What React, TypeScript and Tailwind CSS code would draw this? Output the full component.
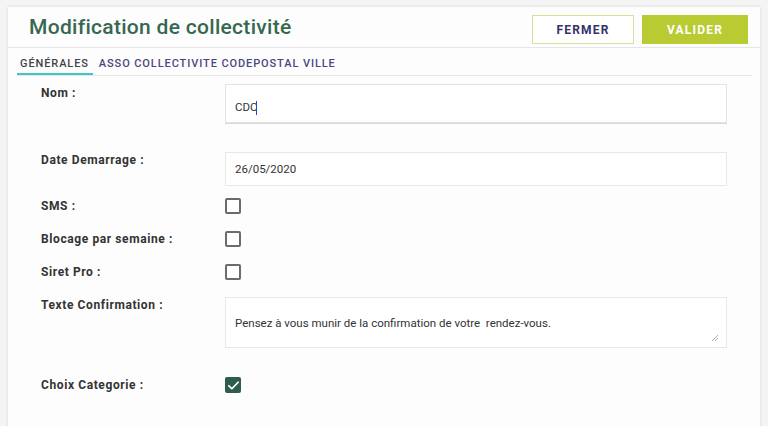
import React from "react";

function Checkbox({ checked }: { checked?: boolean }) {
  if (checked) {
    return (
      <div className="w-4 h-4 rounded-[2px] bg-[#2e5d4b] flex items-center justify-center">
        <svg width="13" height="13" viewBox="0 0 24 24" fill="none">
          <path d="M3.5 12.5l5.5 5.5L20.5 6" stroke="white" strokeWidth="3.2" strokeLinecap="round" strokeLinejoin="round" />
        </svg>
      </div>
    );
  }
  return <div className="w-4 h-4 rounded-[2px] border-2 border-[#6b6b6b] bg-white" />;
}

export default function App() {
  const label = "w-[184px] shrink-0 text-[12px] leading-4 font-bold tracking-[0.6px] text-[#333333]";
  return (
    <div className="w-[768px] h-[426px] bg-[#f4f4f4] overflow-hidden" style={{ fontFamily: "Roboto, 'Liberation Sans', sans-serif" }}>
      <div className="ml-[8px] mt-[7px] w-[752px] h-[440px] bg-[#fdfdfd] shadow-[0_0_3px_rgba(0,0,0,0.12)]">
        <div className="h-[41px] border-b border-[#e6e6e6] flex items-start justify-between pl-[21px] pr-[12px]">
          <h1 className="text-[21px] font-medium text-[#36684f] tracking-[0.3px] leading-none pt-[10px]">Modification de collectivité</h1>
          <div className="flex gap-[8px] pt-[8px]">
            <button className="w-[102px] h-[29px] border border-[#d5e29a] bg-white text-[12px] font-bold tracking-[1.2px] text-[#35336a] pt-[1px]">FERMER</button>
            <button className="w-[106px] h-[29px] bg-[#b8cb33] text-[12px] font-bold tracking-[1.2px] text-white pt-[1px]">VALIDER</button>
          </div>
        </div>
        <div className="ml-[9px] mr-[8px] h-[28px] border-b border-[#e6e6e6] flex items-start">
          <div className="h-[27px] pl-[3px] pr-[4px] pt-[9px] leading-[13px] border-b-2 border-[#3ec8be] text-[11px] tracking-[0.9px] text-[#444] font-medium">GÉNÉRALES</div>
          <div className="h-[27px] pl-[6px] pt-[9px] leading-[13px] text-[11px] tracking-[0.9px] text-[#4a4780] font-medium">ASSO COLLECTIVITE CODEPOSTAL VILLE</div>
        </div>
        <div className="pl-[33px] pr-[33px]">
          <div className="flex mt-[8px]">
            <div className={label + " pt-[1px]"}>Nom :</div>
            <div className="flex-1 h-[39px] border border-[#e3e3e3] shadow-[0_1px_0_#d9d9d9] bg-white flex items-center pl-[9px] pt-[9px] text-[11.5px] text-[#333]">
              CDC<span className="w-px h-[14px] bg-[#1a4bd6] -ml-[2px]" />
            </div>
          </div>
          <div className="flex mt-[29px]">
            <div className={label}>Date Demarrage :</div>
            <div className="flex-1 h-[34px] border border-[#e8e8e8] bg-white flex items-center pl-[9px] pt-[2px] text-[11.5px] text-[#333]">26/05/2020</div>
          </div>
          <div className="flex items-center mt-[12px]">
            <div className={label}>SMS :</div>
            <Checkbox />
          </div>
          <div className="flex items-center mt-[17px]">
            <div className={label}>Blocage par semaine :</div>
            <Checkbox />
          </div>
          <div className="flex items-center mt-[17px]">
            <div className={label}>Siret Pro :</div>
            <Checkbox />
          </div>
          <div className="flex mt-[17px]">
            <div className={label}>Texte Confirmation :</div>
            <div className="flex-1 h-[51px] border border-[#e8e8e8] bg-white relative pl-[9px] pt-[17px] text-[11.5px] text-[#333] leading-4">
              Pensez à vous munir de la confirmation de votre&nbsp; rendez-vous.
              <svg className="absolute right-[8px] bottom-[6px]" width="6" height="6" viewBox="0 0 6 6">
                <path d="M6 0L0 6M6 3L3 6" stroke="#999" strokeWidth="0.8" />
              </svg>
            </div>
          </div>
          <div className="flex items-center mt-[29px]">
            <div className={label}>Choix Categorie :</div>
            <Checkbox checked />
          </div>
        </div>
      </div>
    </div>
  );
}
